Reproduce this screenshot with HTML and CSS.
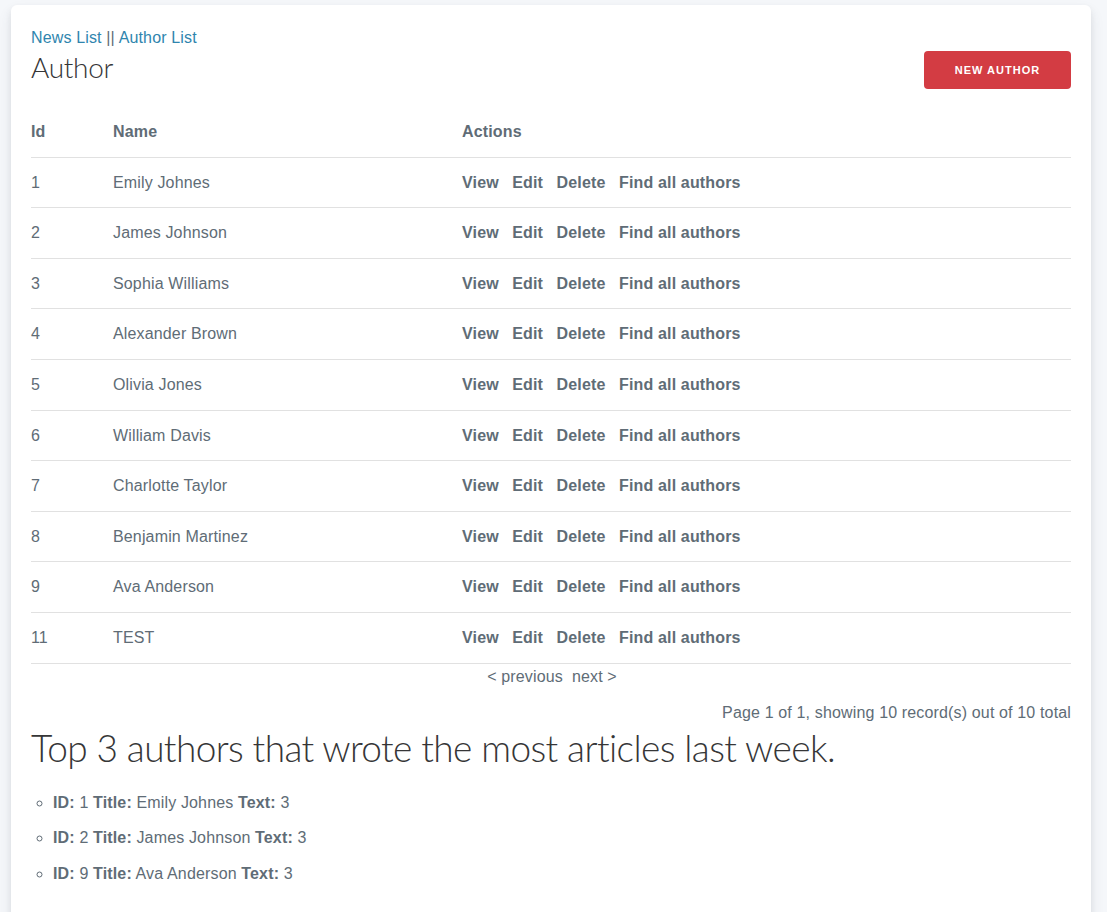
FILE: index.html
```html
<!DOCTYPE html>
<html>
<head>
<meta charset="utf-8">
<link rel="stylesheet" href="styles.css">
</head>
<body>
<main class="content">
  <div class="nav"><a href="#">News List</a> || <a href="#">Author List</a></div>
  <div class="head">
    <h3 class="title">Author</h3>
    <a class="button" href="#">New Author</a>
  </div>
  <table class="grid">
    <thead>
      <tr><th class="c-id">Id</th><th class="c-name">Name</th><th class="c-act">Actions</th></tr>
    </thead>
    <tbody>
      <tr><td>1</td><td>Emily Johnes</td><td class="actions"><a href="#">View</a><a href="#">Edit</a><a href="#">Delete</a><a href="#">Find all authors</a></td></tr>
      <tr><td>2</td><td>James Johnson</td><td class="actions"><a href="#">View</a><a href="#">Edit</a><a href="#">Delete</a><a href="#">Find all authors</a></td></tr>
      <tr><td>3</td><td>Sophia Williams</td><td class="actions"><a href="#">View</a><a href="#">Edit</a><a href="#">Delete</a><a href="#">Find all authors</a></td></tr>
      <tr><td>4</td><td>Alexander Brown</td><td class="actions"><a href="#">View</a><a href="#">Edit</a><a href="#">Delete</a><a href="#">Find all authors</a></td></tr>
      <tr><td>5</td><td>Olivia Jones</td><td class="actions"><a href="#">View</a><a href="#">Edit</a><a href="#">Delete</a><a href="#">Find all authors</a></td></tr>
      <tr><td>6</td><td>William Davis</td><td class="actions"><a href="#">View</a><a href="#">Edit</a><a href="#">Delete</a><a href="#">Find all authors</a></td></tr>
      <tr><td>7</td><td>Charlotte Taylor</td><td class="actions"><a href="#">View</a><a href="#">Edit</a><a href="#">Delete</a><a href="#">Find all authors</a></td></tr>
      <tr><td>8</td><td>Benjamin Martinez</td><td class="actions"><a href="#">View</a><a href="#">Edit</a><a href="#">Delete</a><a href="#">Find all authors</a></td></tr>
      <tr><td>9</td><td>Ava Anderson</td><td class="actions"><a href="#">View</a><a href="#">Edit</a><a href="#">Delete</a><a href="#">Find all authors</a></td></tr>
      <tr><td>11</td><td>TEST</td><td class="actions"><a href="#">View</a><a href="#">Edit</a><a href="#">Delete</a><a href="#">Find all authors</a></td></tr>
    </tbody>
  </table>
  <div class="paginator">
    <ul class="pagination">
      <li><a href="#">&lt; previous</a></li>
      <li><a href="#">next &gt;</a></li>
    </ul>
    <p class="counter">Page 1 of 1, showing 10 record(s) out of 10 total</p>
  </div>
  <h2 class="top">Top 3 authors that wrote the most articles last week.</h2>
  <ul class="toplist">
    <li><strong>ID:</strong> 1 <strong>Title:</strong> Emily Johnes <strong>Text:</strong> 3</li>
    <li><strong>ID:</strong> 2 <strong>Title:</strong> James Johnson <strong>Text:</strong> 3</li>
    <li><strong>ID:</strong> 9 <strong>Title:</strong> Ava Anderson <strong>Text:</strong> 3</li>
  </ul>
</main>
</body>
</html>
```
FILE: styles.css
```css
html, body {
  margin: 0;
  padding: 0;
}
body {
  background: #f5f7fa;
  font-family: "Liberation Sans", Arial, sans-serif;
  font-size: 16px;
  line-height: 1.6;
  color: #606c76;
  padding: 5px 16px 0 11px;
  height: 912px;
  box-sizing: border-box;
  overflow: hidden;
  letter-spacing: 0.15px;
}
a {
  color: #2f85ae;
  text-decoration: none;
}
.content {
  background: #fff;
  border-radius: 6px;
  box-shadow: 0 7px 14px 0 rgba(60, 66, 87, 0.1), 0 3px 6px 0 rgba(0, 0, 0, 0.07);
  padding: 20px 20px 40px;
  min-height: 900px;
  box-sizing: border-box;
}
.nav {
  height: 26px;
}
.head {
  display: flex;
  justify-content: space-between;
  align-items: flex-start;
}
.title {
  margin: 0 0 23px;
  font-family: Lato, "Open Sans", sans-serif;
  font-weight: 300;
  font-size: 28px;
  line-height: 33px;
  color: #363637;
  letter-spacing: -0.3px;
}
.button {
  display: block;
  background: #d33c43;
  color: #fff;
  border-radius: 4px;
  height: 38px;
  line-height: 39px;
  width: 147px;
  text-align: center;
  font-size: 11px;
  font-weight: 700;
  letter-spacing: 1px;
  text-transform: uppercase;
}
.grid {
  width: 100%;
  border-collapse: collapse;
  border-spacing: 0;
}
.grid th, .grid td {
  text-align: left;
  padding: 12px 15px;
  border-bottom: 1px solid #e1e1e1;
  line-height: 25.6px;
}
.grid th:first-child, .grid td:first-child {
  padding-left: 0;
}
.grid th {
  font-weight: 700;
}
.c-id { width: 52px; }
.c-name { width: 319px; }
.actions a {
  color: #606c76;
  font-weight: 700;
  margin-right: 13.5px;
}
.paginator {
  text-align: center;
}
.pagination {
  list-style: none;
  margin: 0;
  padding: 0 0 0 2px;
  display: flex;
  justify-content: center;
  gap: 9px;
  height: 36px;
}
.pagination a {
  color: #606c76;
  display: block;
}
.counter {
  text-align: right;
  margin: 0;
  height: 26px;
}
.top {
  margin: 0 0 20px;
  font-family: Lato, "Open Sans", sans-serif;
  font-weight: 300;
  font-size: 37px;
  line-height: 44px;
  color: #363637;
  letter-spacing: -0.6px;
}
.toplist {
  list-style: circle;
  margin: 0;
  padding-left: 22px;
}
.toplist li {
  margin-bottom: 10px;
  line-height: 25.6px;
}
```
